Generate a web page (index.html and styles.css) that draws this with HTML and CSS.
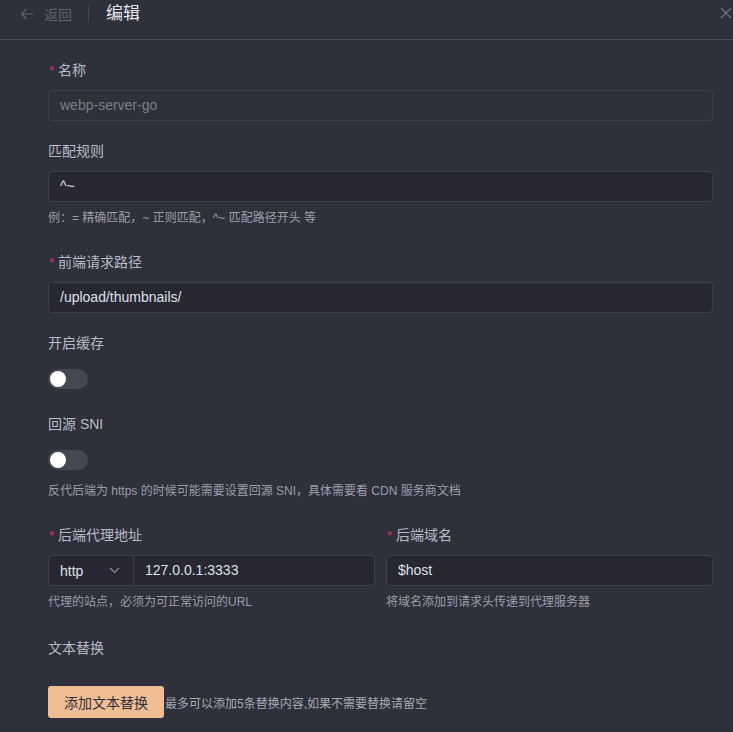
FILE: index.html
```html
<!DOCTYPE html>
<html lang="zh">
<head>
<meta charset="utf-8">
<title>编辑</title>
<link rel="stylesheet" href="styles.css">
</head>
<body>
<header class="header">
  <div class="back">
    <svg class="back-icon" width="14" height="14" viewBox="0 0 14 14"><path d="M13 7H1.5M6.5 2L1.5 7l5 5" fill="none" stroke="currentColor" stroke-width="1.2"/></svg>
    <span>返回</span>
  </div>
  <div class="divider"></div>
  <div class="title">编辑</div>
  <svg class="close" width="12" height="12" viewBox="0 0 12 12"><path d="M1 1l10 10M11 1L1 11" fill="none" stroke="currentColor" stroke-width="1.3"/></svg>
</header>

<main class="form">
  <div class="item">
    <div class="label"><span class="req">*</span>名称</div>
    <div class="input disabled">webp-server-go</div>
  </div>

  <div class="item has-help">
    <div class="label">匹配规则</div>
    <div class="input">^~</div>
    <div class="help">例：= 精确匹配，~ 正则匹配，^~ 匹配路径开头 等</div>
  </div>

  <div class="item">
    <div class="label"><span class="req">*</span>前端请求路径</div>
    <div class="input">/upload/thumbnails/</div>
  </div>

  <div class="item">
    <div class="label">开启缓存</div>
    <div class="switch-row"><span class="switch"><span class="knob"></span></span></div>
  </div>

  <div class="item has-help">
    <div class="label">回源 SNI</div>
    <div class="switch-row"><span class="switch"><span class="knob"></span></span></div>
    <div class="help">反代后端为 https 的时候可能需要设置回源 SNI，具体需要看 CDN 服务商文档</div>
  </div>

  <div class="item has-help cols">
    <div class="col">
      <div class="label"><span class="req">*</span>后端代理地址</div>
      <div class="group">
        <div class="select">http<svg class="chev" width="11" height="7" viewBox="0 0 11 7"><path d="M1 1l4.5 4.5L10 1" fill="none" stroke="currentColor" stroke-width="1.2"/></svg></div>
        <div class="input grouped">127.0.0.1:3333</div>
      </div>
      <div class="help">代理的站点，必须为可正常访问的URL</div>
    </div>
    <div class="col">
      <div class="label"><span class="req">*</span>后端域名</div>
      <div class="input">$host</div>
      <div class="help">将域名添加到请求头传递到代理服务器</div>
    </div>
  </div>

  <div class="item">
    <div class="label">文本替换</div>
    <div class="btn-row">
      <button class="btn">添加文本替换</button>
      <span class="btn-note">最多可以添加5条替换内容,如果不需要替换请留空</span>
    </div>
  </div>
</main>
</body>
</html>
```

FILE: styles.css
```css
* { box-sizing: border-box; }
html, body { margin: 0; padding: 0; }
body {
  background: #2e303c;
  font-family: "Liberation Sans", "Noto Sans CJK SC", sans-serif;
  font-size: 14px;
  color: #b9bbc5;
  overflow: hidden;
}
.header {
  height: 40px;
  border-bottom: 1px solid #474957;
  display: flex;
  align-items: flex-start;
  padding: 3px 0 0 20px;
  position: relative;
}
.back {
  display: flex;
  align-items: center;
  height: 22px;
  color: #5f6270;
  font-size: 14px;
}
.back-icon { margin-right: 10px; }
.divider {
  width: 1px;
  height: 16px;
  background: #444655;
  margin: 3px 17px 0 16px;
}
.title {
  height: 22px;
  line-height: 22px;
  font-size: 17px;
  color: #e6e7ec;
}
.close {
  position: absolute;
  right: 1px;
  top: 7px;
  color: #6e717d;
}
.form {
  padding: 20px 20px 0 48px;
}
.item { margin-bottom: 20px; }
.item.has-help { margin-bottom: 25px; }
.item.cols { margin-bottom: 27px; }
.label {
  line-height: 20px;
  height: 20px;
  margin-bottom: 10px;
  color: #b9bbc5;
  white-space: nowrap;
}
.req { color: #d03050; margin: 0 4px 0 1px; font-size: 13px; }
.input {
  height: 31px;
  line-height: 29px;
  border: 1px solid #3e404d;
  border-radius: 4px;
  background: #262733;
  padding: 0 11px;
  color: #dfe0e6;
  white-space: nowrap;
}
.input.disabled {
  background: #2e303c;
  color: #7b7e8a;
}
.help {
  margin-top: 7px;
  line-height: 18px;
  font-size: 12px;
  color: #9c9ea9;
  white-space: nowrap;
}
.switch-row {
  height: 31px;
  display: flex;
  align-items: center;
}
.switch {
  width: 40px;
  height: 20px;
  border-radius: 10px;
  background: #454753;
  position: relative;
  display: inline-block;
}
.knob {
  position: absolute;
  left: 2px;
  top: 2px;
  width: 16px;
  height: 16px;
  border-radius: 50%;
  background: #ffffff;
}
.cols {
  display: grid;
  grid-template-columns: 1fr 1fr;
  column-gap: 11px;
}
.group { display: flex; }
.select {
  width: 86px;
  height: 31px;
  border: 1px solid #3e404d;
  border-radius: 4px 0 0 4px;
  background: #262733;
  padding: 0 11px;
  display: flex;
  align-items: center;
  justify-content: space-between;
  color: #dfe0e6;
}
.chev { color: #8d909b; margin-right: 2px; }
.input.grouped {
  flex: 1;
  border-left: none;
  border-radius: 0 4px 4px 0;
}
.btn-row {
  margin-top: 28px;
  display: flex;
  align-items: center;
}
.btn {
  width: 116px;
  height: 32px;
  border: none;
  border-radius: 3px;
  background: #efbc93;
  color: #2f303a;
  font-family: inherit;
  font-size: 14px;
  padding: 0;
}
.btn-note {
  margin-left: 1px;
  color: #a8aab4;
  font-size: 12px;
  white-space: nowrap;
}
```
